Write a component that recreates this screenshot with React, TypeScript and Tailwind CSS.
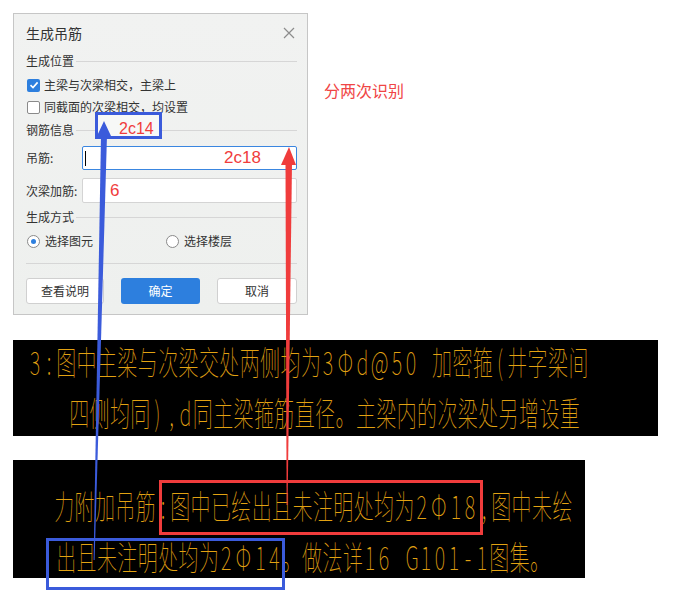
import React from 'react'

const ui = "font-['Noto_Sans_CJK_SC','Noto_Sans',sans-serif]"
const cad = "font-['Noto_Sans_CJK_SC','Noto_Sans',sans-serif] font-thin text-[#e2a212] text-[20px]"

const SectionTitle = ({ label }: { label: string }) => (
  <div className="flex items-center h-[16px] text-[12px] text-[#333]">
    <span>{label}</span>
    <div className="flex-1 ml-[2px] h-px bg-[#d6d6d6]" />
  </div>
)

const Checkbox = ({ checked, label }: { checked?: boolean; label: string }) => (
  <div className="flex items-center h-[22px] text-[12px] text-[#333]">
    <div
      className={
        checked
          ? 'w-[13px] h-[13px] ml-[1px] rounded-[2px] bg-[#2d7fde] flex items-center justify-center'
          : 'w-[13px] h-[13px] ml-[1px] rounded-[2px] border border-[#8a8a8a] bg-white'
      }
    >
      {checked && (
        <svg width="10" height="10" viewBox="0 0 10 10">
          <path d="M1.5 5.2 L4 7.6 L8.6 2.4" fill="none" stroke="white" strokeWidth="1.6" />
        </svg>
      )}
    </div>
    <span className="ml-[4px]">{label}</span>
  </div>
)

const Radio = ({ checked, label }: { checked?: boolean; label: string }) => (
  <div className="flex items-center text-[12px] text-[#333]">
    <div className="w-[13px] h-[13px] ml-[1px] rounded-full border border-[#8a8a8a] bg-white flex items-center justify-center">
      {checked && <div className="w-[5px] h-[5px] rounded-full bg-[#2d7fde]" />}
    </div>
    <span className="ml-[5px]">{label}</span>
  </div>
)

// CAD text: wide glyphs (CJK, Φ, @) on a ~20px pitch, narrow ones on a 14px cell
const isWide = (ch: string) => ch.charCodeAt(0) >= 0x2e80 || ch === 'Φ' || ch === '@'

const CadLine = ({ text, pad, top }: { text: string; pad: string; top: string }) => (
  <div className={`flex items-center h-[34px] whitespace-nowrap ${pad} ${top}`}>
    <span className={`inline-flex scale-y-[1.65] ${cad}`}>
      {Array.from(text).map((ch, i) =>
        isWide(ch) ? (
          <span key={i} className="inline-block w-[20.4px] text-center">
            {ch}
          </span>
        ) : (
          <span key={i} className="inline-block w-[14px] text-center">
            {ch === ' ' ? '\u00a0' : ch}
          </span>
        )
      )}
    </span>
  </div>
)

const Overlay = () => (
  <svg className="absolute inset-0 pointer-events-none" width="693" height="609" viewBox="0 0 693 609">
    {/* blue note box over the rebar section */}
    <rect x="96.5" y="113.5" width="64" height="24" fill="#f7f8f7" stroke="#3b5bdb" strokeWidth="3" />
    <text x="119" y="134" fill="#f03c3c" fontSize="16" fontFamily="Liberation Sans, sans-serif">2c14</text>

    {/* boxes around the drawing notes */}
    <rect x="160.5" y="481.5" width="321" height="52" fill="none" stroke="#f03c3c" strokeWidth="3" />
    <rect x="47.5" y="539.5" width="236" height="49" fill="none" stroke="#3b5bdb" strokeWidth="3" />

    {/* blue arrow */}
    <polygon points="101,135 107,135 94.6,560 93.6,560" fill="#3b5bdb" />
    <polygon points="104,121 111,136 97,136" fill="#3b5bdb" />

    {/* red arrow */}
    <polygon points="285.5,163 292,163 287.6,505 286.6,505" fill="#f03c3c" />
    <polygon points="289,147 296,165 281,165" fill="#f03c3c" />
  </svg>
)

export default function App() {
  return (
    <div className={`relative w-[693px] h-[609px] bg-white overflow-hidden ${ui}`}>
      <div className="flex flex-col pt-[13px] pl-[13px]">
        <div className="flex items-start">
          {/* dialog */}
          <div className="w-[295px] h-[302px] border border-[#c6c6c6] bg-gradient-to-b from-[#f1f2f1] to-[#eef0ee] flex flex-col">
            <div className="flex items-center justify-between h-[40px] pl-[12px] pr-[12px] mt-[-1px]">
              <span className="text-[14px] text-[#333]">生成吊筋</span>
              <svg width="12" height="12" viewBox="0 0 12 12">
                <path d="M1 1 L11 11 M11 1 L1 11" stroke="#8c8c8c" strokeWidth="1.2" />
              </svg>
            </div>
            <div className="flex flex-col pl-[12px] pr-[10px]">
              <SectionTitle label="生成位置" />
              <div className="mt-[5px]">
                <Checkbox checked label="主梁与次梁相交，主梁上" />
                <Checkbox label="同截面的次梁相交，均设置" />
              </div>
              <div className="mt-[4px]">
                <SectionTitle label="钢筋信息" />
              </div>
              <div className="flex items-center mt-[8px] h-[24px]">
                <span className="w-[56px] text-[12px] text-[#333]">吊筋:</span>
                <div className="flex-1 h-full rounded-[2px] border border-[#3a86e0] bg-white flex items-center">
                  <div className="ml-[2px] w-px h-[15px] bg-black" />
                  <span className="ml-[138px] text-[17px] text-[#f03c3c] font-['Liberation_Sans',sans-serif]">2c18</span>
                </div>
              </div>
              <div className="flex items-center mt-[8px] h-[25px]">
                <span className="w-[56px] text-[12px] text-[#333]">次梁加筋:</span>
                <div className="flex-1 h-full rounded-[2px] border border-[#d4d4d4] bg-white flex items-center">
                  <span className="ml-[27px] text-[17px] text-[#f03c3c] font-['Liberation_Sans',sans-serif]">6</span>
                </div>
              </div>
              <div className="mt-[6px]">
                <SectionTitle label="生成方式" />
              </div>
              <div className="flex items-center h-[22px] mt-[5px]">
                <div className="w-[139px]">
                  <Radio checked label="选择图元" />
                </div>
                <Radio label="选择楼层" />
              </div>
              <div className="h-px bg-[#d6d6d6] mt-[11px]" />
              <div className="flex justify-between mt-[14px] text-[12px]">
                <button className="w-[78px] h-[26px] rounded-[3px] border border-[#d0d0d0] bg-white text-[#333]">查看说明</button>
                <button className="w-[79px] h-[26px] rounded-[3px] bg-[#2d7fde] text-white">确定</button>
                <button className="w-[80px] h-[26px] rounded-[3px] border border-[#d0d0d0] bg-white text-[#333]">取消</button>
              </div>
            </div>
          </div>
          <span className="ml-[16px] mt-[65px] text-[16px] text-[#f04545]">分两次识别</span>
        </div>

        {/* drawing notes */}
        <div className="w-[645px] h-[96px] mt-[25px] bg-black flex flex-col">
          <CadLine text="3:图中主梁与次梁交处两侧均为3Φd@50 加密箍(井字梁间" pad="pl-[15px]" top="mt-[5px]" />
          <CadLine text="四侧均同),d同主梁箍筋直径。主梁内的次梁处另增设重" pad="pl-[56px]" top="mt-[17px]" />
        </div>
        <div className="w-[572px] h-[118px] mt-[24px] bg-black flex flex-col">
          <CadLine text="力附加吊筋:图中已绘出且未注明处均为2Φ18,图中未绘" pad="pl-[41px]" top="mt-[29px]" />
          <CadLine text="出且未注明处均为2Φ14。做法详16 G101-1图集。" pad="pl-[43px]" top="mt-[17px]" />
        </div>
      </div>
      <Overlay />
    </div>
  )
}
